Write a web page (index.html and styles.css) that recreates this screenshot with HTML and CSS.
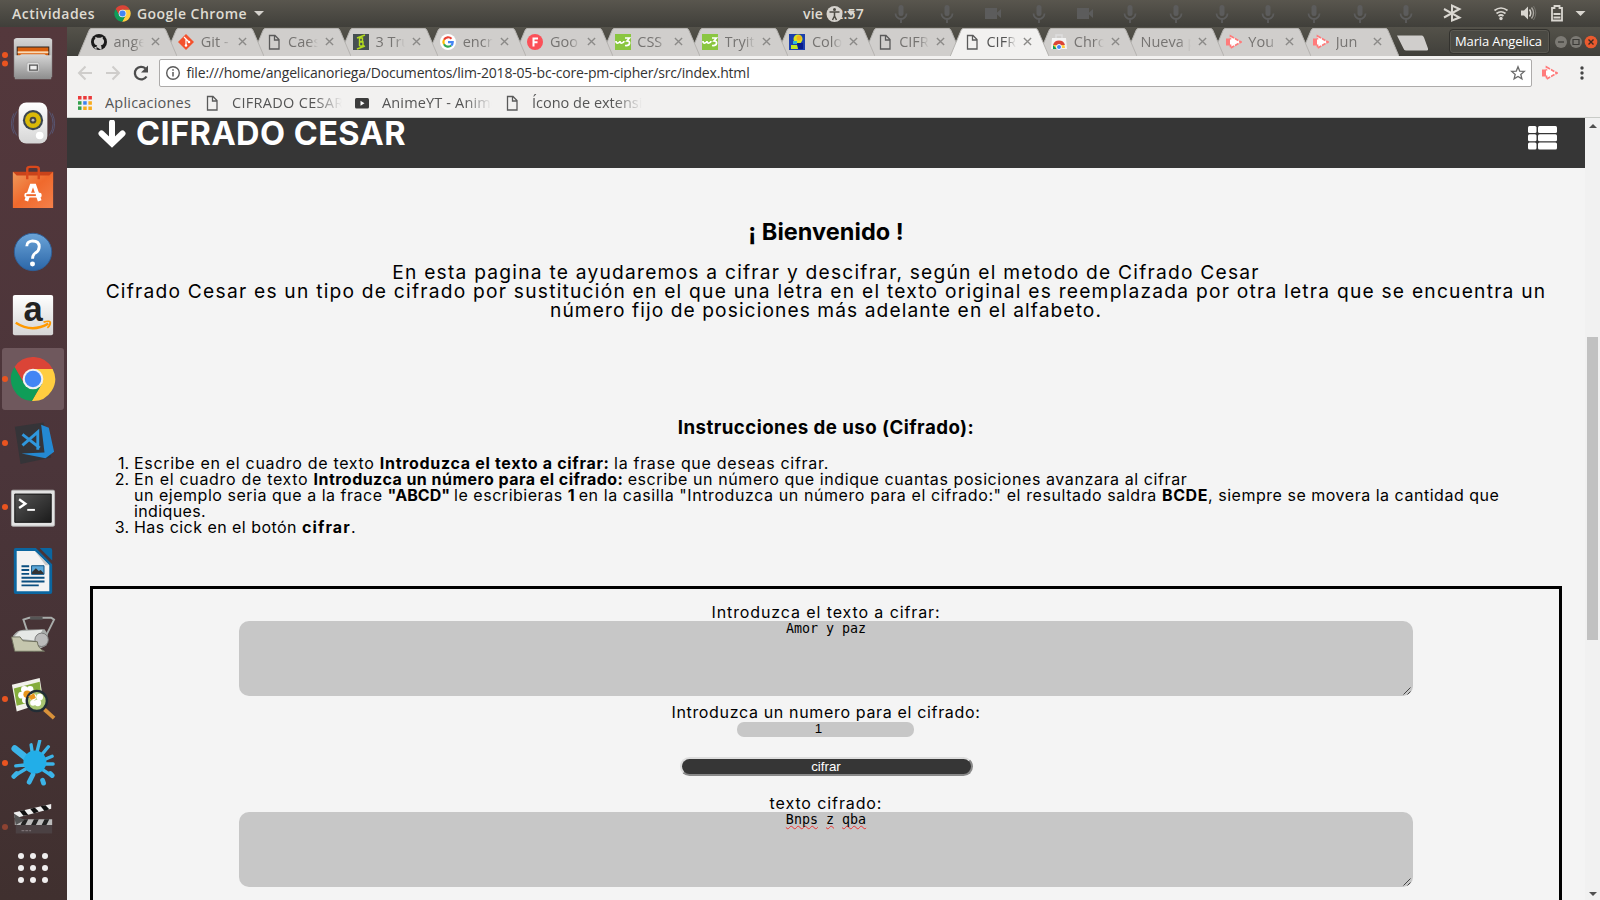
FILE: index.html
```html
<!DOCTYPE html>
<html lang="es">
<head>
<meta charset="utf-8">
<title>CIFRADO CESAR</title>
<link rel="stylesheet" href="styles.css">
</head>
<body>
<svg class="defs" width="0" height="0">
  <defs>
    <symbol id="chrome" viewBox="0 0 48 48">
      <path fill="#db4437" d="M4.7 11.5A23 23 0 0 1 44.5 13.5H24V24L14.9 29.25Z"/>
      <path fill="#ffcd40" d="M44.5 13.5A23 23 0 0 1 22.8 47L33.1 29.25 24 24V13.5Z"/>
      <path fill="#0f9d58" d="M22.8 47A23 23 0 0 1 4.7 11.5L14.9 29.25 24 24 33.1 29.25Z"/>
      <circle cx="24" cy="24" r="10.8" fill="#f1f1f1"/><circle cx="24" cy="24" r="8.6" fill="#4285f4"/>
    </symbol>
    <symbol id="mic" viewBox="0 0 14 20"><rect x="4.5" y="1" width="5" height="11" rx="2.5" fill="#5c5c5c"/><path d="M1.5 9.500a5.500 5.500 0 0 0 11 0M7 15v4" fill="none" stroke="#5c5c5c" stroke-width="1.800"/></symbol>
    <symbol id="cam" viewBox="0 0 18 20"><rect x="1" y="4" width="12" height="11" fill="#5c5c5c"/><path d="M12 9.500 17 5v9z" fill="#5c5c5c"/></symbol>
    <symbol id="page" viewBox="0 0 16 16"><path d="M3.500 1.500h5.500l4 4v9.500h-9.500zM8.500 1.500v4.500h4.500" fill="none" stroke="#5a5a5a" stroke-width="1.300"/></symbol>
    <symbol id="close" viewBox="0 0 10 10"><path d="M1 1l8 8M9 1l-8 8" stroke="#8b8a88" stroke-width="1.500"/></symbol>
    <symbol id="tab" viewBox="0 0 99.2 28"><path d="M.3 28 11 2.500Q12 .5 13 .5H86Q87 .5 88 2.500L98.900 28" fill="var(--face)" stroke="#b5b3b0" stroke-width="1"/></symbol>
    <symbol id="arrowbox" viewBox="0 0 16 16"><path d="M4.500 2 15 8 4.500 14z" fill="#fff" stroke="#ff7b7b" stroke-width="1.700" stroke-dasharray="4 1"/><path d="M0 4.500h4.500v7H0z" fill="#ff7b7b"/><path d="M4 5.500h5v5H4z" fill="#fff"/></symbol>
    <symbol id="w3" viewBox="0 0 16 16"><path d="M0 0h16v16H0z" fill="#8ac640"/><path d="M1 7q0 2.500 2 2t2-2q0 2.500 2 2t2-2M10 4h4.500L12 7q3 0 2.500 2.500T10 11.500" fill="none" stroke="#fff" stroke-width="1.700"/></symbol>
    <linearGradient id="gm" x2="0" y2="1"><stop stop-color="#d6d6d6"/><stop offset="1" stop-color="#8d8d8d"/></linearGradient>
    <linearGradient id="gw" x2="0" y2="1"><stop stop-color="#fff"/><stop offset="1" stop-color="#d5d5d5"/></linearGradient>
    <linearGradient id="go" x2="1" y2="1"><stop stop-color="#ef9a5c"/><stop offset=".5" stop-color="#f0692c"/><stop offset="1" stop-color="#f4814b"/></linearGradient>
    <linearGradient id="gb" x2="0" y2="1"><stop stop-color="#6ba4d8"/><stop offset="1" stop-color="#2b66a8"/></linearGradient>
    <linearGradient id="gk" x2="1" y2="1"><stop stop-color="#555"/><stop offset="1" stop-color="#1b1b1b"/></linearGradient>
  </defs>
</svg>

<div class="topbar">
  <span class="tb-act">Actividades</span>
  <svg class="tb-chrome" width="17" height="17"><use href="#chrome"/></svg>
  <span class="tb-app">Google Chrome</span>
  <i class="tri"></i>
  <div class="clock">vie 12:57
    <svg class="access" width="30" height="18" viewBox="0 0 30 18"><circle cx="8.500" cy="9" r="8" fill="#d5d2cd"/><circle cx="8.500" cy="4.500" r="1.500" fill="#4c4a43"/><path d="M3.500 7h10M8.500 7v4l-2 4M8.500 11l2 4" stroke="#4c4a43" stroke-width="1.500" fill="none"/><path d="M21 6h8l-4 5z" fill="#d5d2cd"/></svg>
  </div>
  <div class="mics">
    <svg><use href="#mic"/></svg><svg><use href="#mic"/></svg><svg><use href="#cam"/></svg><svg><use href="#mic"/></svg><svg><use href="#cam"/></svg><svg><use href="#mic"/></svg><svg><use href="#mic"/></svg><svg><use href="#mic"/></svg><svg><use href="#mic"/></svg><svg><use href="#mic"/></svg><svg><use href="#mic"/></svg><svg><use href="#mic"/></svg>
  </div>
  <svg class="status" width="150" height="26" viewBox="0 0 150 26" fill="none" stroke="#d9d6d0">
    <path d="M4 9 19.500 17.500 12 20.500V5.500L19.500 9 4 17.500" stroke-width="2"/>
    <path d="M54.500 10.500q6.500-5 13 0M56.500 13.500q4.500-3.500 9 0M58.500 16q2.500-2 5 0" stroke-width="1.700"/><circle cx="61" cy="18.500" r="1.700" fill="#d9d6d0" stroke="none"/>
    <path d="M81 10.500h3l4-4v13l-4-4h-3z" fill="#d9d6d0" stroke="none"/><path d="M89.500 9.500q2.500 3.500 0 7" stroke-width="1.500"/><path d="M91.500 7.500q4 5.500 0 11" stroke="#aaa7a1" stroke-width="1.400"/><path d="M93.500 6q4.500 7 0 14" stroke="#77756f"/>
    <path d="M112 8h2.500V6h5v2h2.500v12.500h-10z" stroke-width="1.800"/><path d="M113.500 14h7M113.500 17.500h7" stroke-width="2"/>
    <path d="M135.500 11h10l-5 5z" fill="#d9d6d0" stroke="none"/>
  </svg>
</div>

<div class="desk">
  <div class="dock">
    <div class="app"><i class="dot two"></i><svg viewBox="0 0 48 48"><path d="M4 4q1-2 3-2h34q2 0 3 2v39H4z" fill="url(#gm)"/><path d="M7 11h34v12H7z" fill="#2d2521"/><path d="M8 12h32v9H8z" fill="#d9600f"/><path d="M8 16h32v2H8z" fill="#f9d9b5"/><path d="M5 20h5l2-1h24l2 1h5v25H5z" fill="url(#gm)"/><rect x="17.500" y="27.500" width="13" height="10" rx="2" fill="#ddd" stroke="#aaa"/><path d="M20.500 30.500h8v5h-8z" fill="#eee" stroke="#555" stroke-width="1.300"/></svg></div>
    <div class="app"><svg viewBox="0 0 48 48"><path d="M7 12Q-1 25 7 37M4 14q-5 11 0 21M41 12q8 13 0 25M44 14q5 11 0 21" fill="none" stroke="#5a648c" stroke-opacity=".7"/><rect x="9" y="2.500" width="30" height="43" rx="8" fill="url(#gw)"/><circle cx="24" cy="21" r="10.500" fill="#3b4650"/><circle cx="24" cy="21" r="8.300" fill="#d9b908"/><circle cx="24" cy="21" r="3.500" fill="#444"/><circle cx="24" cy="21" r="1.500" fill="#bbb"/><circle cx="31" cy="37" r="4" fill="#fff"/></svg></div>
    <div class="app"><svg viewBox="0 0 48 48"><path d="M3 8h42v12H3z" fill="#c9431a"/><path d="M3 8 7 12H41L45 8V46H3z" fill="url(#go)"/><path d="M18 16V5q0-2 3-2h6q3 0 3 2v11" fill="none" stroke="#d9481c" stroke-width="2.500"/><path d="M17 38.500 22.500 22.500h3L31 38.500" fill="none" stroke="#fff" stroke-width="4"/><rect x="15" y="30" width="18" height="5" rx="2" fill="#fff"/><path d="M17 32.500h10" stroke="#f0692c" stroke-width="2"/></svg></div>
    <div class="app"><svg viewBox="0 0 48 48"><circle cx="24" cy="25" r="19.500" fill="url(#gb)" stroke="#2f5f98"/><path d="M17.500 19q0-5 6-5.500 7 0 7 6 0 4-4 6.500-3 2-3 6" fill="none" stroke="#fff" stroke-width="3"/><circle cx="23.500" cy="37.500" r="2.600" fill="#fff"/></svg></div>
    <div class="app"><svg viewBox="0 0 48 48"><rect x="3" y="3" width="42" height="42" rx="2" fill="url(#gw)"/><text x="24" y="30" text-anchor="middle" class="amz">a</text><path d="M6 32q17 11 34 1" fill="none" stroke="#f90" stroke-width="2.500"/><path d="M35 31.500q6-2 7 0 .5 3-3 6" fill="none" stroke="#f90" stroke-width="1.800"/></svg></div>
    <div class="app on"><i class="dot"></i><svg viewBox="0 0 48 48"><use href="#chrome" x="0" y="0" width="48" height="48"/></svg></div>
    <div class="app"><i class="dot"></i><svg viewBox="0 0 48 48"><path d="M5 7 35 2.500 43 39 11 46z" fill="#353438"/><path d="M32.500 5 40.500 8 46 33 37 40 12 35 36 34z" fill="#2489d2"/><path d="M13 15 31 29M13 26.500 29 12.500V31" fill="none" stroke="#2f97dd" stroke-width="3"/></svg></div>
    <div class="app"><i class="dot"></i><svg viewBox="0 0 48 48"><rect x="1.500" y="6.500" width="45" height="37.500" rx="1.500" fill="#e3e3e3" stroke="#b5b5b5"/><path d="M5 10.500h38v29.500H5z" fill="url(#gk)" stroke="#111"/><path d="M9.500 16 16 20.500 9.500 25" fill="none" stroke="#fff" stroke-width="2.500"/><path d="M18 27h8" stroke="#fff" stroke-width="2"/></svg></div>
    <div class="app"><svg class="tall" viewBox="0 0 48 48"><path d="M6 0H27L44 17V46q0 2-2 2H6q-2 0-2-2V2q0-2 2-2z" fill="#0b66a0"/><path d="M31 0h11q2 0 2 2v11z" fill="#0b66a0"/><path d="M7 3H26L41 18V45H7z" fill="#f3f3f3"/><path d="M26 3 41 18h-4z" fill="#c9c9c9"/><path d="M12 19h8M12 23h8M12 27h8M12 31h24M12 35h24M12 39h18" stroke="#0b4f80" stroke-width="2"/><path d="M22.500 18.500h13v9h-13z" fill="#5aa7d8" stroke="#0b4f80"/><path d="M23 27v-2l4-4 3 3 2-1 3 3v1z" fill="#333"/></svg></div>
    <div class="app"><svg viewBox="0 0 48 48"><path d="M18 20 14 8 20 6H43L46 8 36 28" fill="none" stroke="#a9adab" stroke-width="2"/><path d="M21 6.500h13" stroke="#555" stroke-width="3"/><path d="M3 25Q8 18 15 18.500L36 18q6 6 2 17L26 41 5 39z" fill="#a9adab"/><path d="M10 20 34 18.500 28 30 3 27z" fill="#e6e8e6"/><circle cx="33" cy="29" r="7" fill="#bbb" stroke="#777"/><path d="M1.500 26h9l3 4 15 1Q29 38 36 41H5z" fill="#c5c6ae" stroke="#6d6e5c"/></svg></div>
    <div class="app"><i class="dot"></i><svg viewBox="0 0 48 48"><path d="M2 9 31 2 35 28 7 37z" fill="#f1f1ea"/><path d="M4 13 31 6 33 24 7 31z" fill="#85ad3b"/><g fill="#fff"><circle cx="12" cy="20" r="3.500"/><circle cx="15" cy="14" r="3.500"/><circle cx="21" cy="14" r="3.500"/><circle cx="16" cy="25" r="3.500"/></g><circle cx="18" cy="19" r="4" fill="#e8951c"/><circle cx="28" cy="26" r="10.500" fill="#a9c672" stroke="#222d35" stroke-width="2.500"/><g fill="#fff"><circle cx="24" cy="22" r="3.500"/><circle cx="31" cy="22" r="3.500"/><circle cx="29" cy="28" r="3.500"/><circle cx="24" cy="28" r="3"/></g><path d="M19 21l6-3 2 5-5 2z" fill="#e8951c"/><path d="M36 35 46 44" stroke="#d9923a" stroke-width="4"/></svg></div>
    <div class="app"><i class="dot"></i><svg viewBox="0 0 48 48"><g stroke="#3cb4e8" stroke-linecap="round" fill="none"><path d="M25 25 5 9" stroke-width="7"/><path d="M25 25 22 5M25 25 31 1M25 25 40 7M25 25 44 17M25 25 45 25M25 25 43 37M25 25 5 37M25 25 6 27" stroke-width="3.500"/><path d="M42 35 44 37M7 35 4 38M24 36 20 44M34 42 35 45" stroke-width="5"/></g><circle cx="26" cy="23" r="12" fill="#22aee8"/></svg></div>
    <div class="app clap"><i class="dot dim"></i><svg viewBox="0 0 48 48"><path d="M4 12 43 3V8L5 18z" fill="#eee"/><path d="M10 10.500l5-1 4 5-5 1zM21 8l5-1 4 4-5 2zM32 5.500l5-1 4 4-5 2z" fill="#111"/><path d="M5 19h39v6H5z" fill="#bbb"/><path d="M14 19h5l-3 6h-5zM25 19h5l-3 6h-5zM36 19h5l-3 6h-5z" fill="#222"/><path d="M4 13 15 20 6 25z" fill="#555"/><path d="M6 25h38v9H6z" fill="#4b4143"/><path d="M12 31h10" stroke="#8a8284" stroke-dasharray="3 1"/></svg></div>
    <svg class="grid" width="30" height="30" viewBox="0 0 30 30" fill="#f0eeee"><circle cx="3" cy="3" r="3"/><circle cx="15" cy="3" r="3"/><circle cx="27" cy="3" r="3"/><circle cx="3" cy="15" r="3"/><circle cx="15" cy="15" r="3"/><circle cx="27" cy="15" r="3"/><circle cx="3" cy="27" r="3"/><circle cx="15" cy="27" r="3"/><circle cx="27" cy="27" r="3"/></svg>
  </div>

  <div class="window">
    <div class="tabs">
      <div class="tab"><svg class="bg"><use href="#tab"/></svg><svg class="fav" viewBox="0 0 16 16"><circle cx="8" cy="8" r="8" fill="#1b1b1b"/><path d="M5.500 16v-3q-3 .5-3.500-1.500M5.500 13q0-1 .8-1.600C2.500 11 2 6 4.300 4.700V2.800l2.200 1h3l2.200-1v1.900C14 6 13.500 11 9.700 11.400q.8.600.8 2V16z" fill="#d0cecc"/></svg><span class="t">ange</span><svg class="x"><use href="#close"/></svg></div>
      <div class="tab"><svg class="bg"><use href="#tab"/></svg><svg class="fav" viewBox="0 0 16 16"><path d="M8 0l8 8-8 8-8-8z" fill="#f4512c"/><path d="M6 3l5 5M8 5v7" stroke="#fff" stroke-width="1.200"/><circle cx="8" cy="11.500" r="1.300" fill="#fff"/><circle cx="11" cy="8" r="1.300" fill="#fff"/></svg><span class="t">Git -</span><svg class="x"><use href="#close"/></svg></div>
      <div class="tab"><svg class="bg"><use href="#tab"/></svg><svg class="fav"><use href="#page"/></svg><span class="t">Caes</span><svg class="x"><use href="#close"/></svg></div>
      <div class="tab"><svg class="bg"><use href="#tab"/></svg><svg class="fav" viewBox="0 0 16 16"><path d="M0 0h16v16H0z" fill="#454f51"/><path d="M6.500 4v8M6.500 4h3v3.500h-3M6.500 8h3.500v4H6.500M4 4l8-3M4 15l8-3" fill="none" stroke="#b4dc1e" stroke-width="1.400"/></svg><span class="t">3 Tru</span><svg class="x"><use href="#close"/></svg></div>
      <div class="tab"><svg class="bg"><use href="#tab"/></svg><svg class="fav" viewBox="0 0 16 16"><circle cx="8" cy="8" r="8" fill="#fff"/><g fill="none" stroke-width="2.200"><path d="M11.500 4.700A4.700 4.700 0 0 0 4 5.700" stroke="#ea4335"/><path d="M4 5.700a4.700 4.700 0 0 0 0 4.600" stroke="#fbbc05"/><path d="M4 10.300a4.700 4.700 0 0 0 7.200 1.200" stroke="#34a853"/><path d="M11.200 11.500q1.500-1.300 1.500-3.300H8" stroke="#4285f4"/></g></svg><span class="t">encr</span><svg class="x"><use href="#close"/></svg></div>
      <div class="tab"><svg class="bg"><use href="#tab"/></svg><svg class="fav" viewBox="0 0 16 16"><circle cx="8" cy="8" r="8" fill="#fb5058"/><path d="M6.500 12.500V4.500H11M6.500 8.300h4" stroke="#fff" stroke-width="2" fill="none"/></svg><span class="t">Goo</span><svg class="x"><use href="#close"/></svg></div>
      <div class="tab"><svg class="bg"><use href="#tab"/></svg><svg class="fav"><use href="#w3"/></svg><span class="t">CSS</span><svg class="x"><use href="#close"/></svg></div>
      <div class="tab"><svg class="bg"><use href="#tab"/></svg><svg class="fav"><use href="#w3"/></svg><span class="t">Tryit</span><svg class="x"><use href="#close"/></svg></div>
      <div class="tab"><svg class="bg"><use href="#tab"/></svg><svg class="fav" viewBox="0 0 16 16"><path d="M0 0h16v16H0z" fill="#1b3fae"/><circle cx="9" cy="5" r="4.500" fill="#d9e41f"/><circle cx="10" cy="4" r="2.500" fill="#f3b01c"/><path d="M2 11h6l2 4H2z" fill="#c3e41f"/><path d="M8 9h6v6H9z" fill="#061c8c"/><path d="M4 7h4v3H4z" fill="#2fb6d6"/></svg><span class="t">Colo</span><svg class="x"><use href="#close"/></svg></div>
      <div class="tab"><svg class="bg"><use href="#tab"/></svg><svg class="fav"><use href="#page"/></svg><span class="t">CIFR</span><svg class="x"><use href="#close"/></svg></div>
      <div class="tab active"><svg class="bg"><use href="#tab"/></svg><svg class="fav"><use href="#page"/></svg><span class="t">CIFR</span><svg class="x"><use href="#close"/></svg></div>
      <div class="tab"><svg class="bg"><use href="#tab"/></svg><svg class="fav" viewBox="0 0 16 16"><path d="M1 4h14l1 11H0z" fill="#f3f3f3"/><path d="M5 4V1h6v3" fill="none" stroke="#ddd" stroke-width="1.500"/><path d="M2 14a6 6 0 0 1 12 0z" fill="#ffcd40"/><path d="M2 11a6.300 6.300 0 0 1 12 0z" fill="#db4437"/><path d="M2 11l4 4H2z" fill="#0f9d58"/><circle cx="8" cy="13" r="2.500" fill="#4285f4" stroke="#fff"/></svg><span class="t">Chro</span><svg class="x"><use href="#close"/></svg></div>
      <div class="tab plain"><svg class="bg"><use href="#tab"/></svg><span class="t">Nueva p</span><svg class="x"><use href="#close"/></svg></div>
      <div class="tab"><svg class="bg"><use href="#tab"/></svg><svg class="fav"><use href="#arrowbox"/></svg><span class="t">You</span><svg class="x"><use href="#close"/></svg></div>
      <div class="tab"><svg class="bg"><use href="#tab"/></svg><svg class="fav"><use href="#arrowbox"/></svg><span class="t">Jun</span><svg class="x"><use href="#close"/></svg></div>
      <svg class="newtab" width="34" height="16" viewBox="0 0 34 16"><path d="M1 .5h25q1 0 2 2l4 11q.5 2-1 2H10q-2 0-2.500-2z" fill="#d0cecc"/></svg>
      <div class="user">Maria Angelica</div>
      <svg class="winbtn" width="46" height="14" viewBox="0 0 46 14"><circle cx="7" cy="7" r="6" fill="#7c7a74"/><path d="M4 7h6" stroke="#3c3b37" stroke-width="1.300"/><circle cx="22" cy="7" r="6" fill="#7c7a74"/><path d="M19 4.500h6v5h-6z" fill="none" stroke="#3c3b37" stroke-width="1.200"/><circle cx="37" cy="7" r="6.300" fill="#ea5a2e"/><path d="M34.500 4.500l5 5M39.500 4.500l-5 5" stroke="#3c2a22" stroke-width="1.400"/></svg>
    </div>

    <div class="toolbar">
      <svg class="nav" width="78" height="20" viewBox="0 0 78 20" fill="none"><g stroke="#cfcdcb" stroke-width="2"><path d="M15 10H2.500M8.500 3.500 2 10l6.500 6.500M29 10h12.500M35.500 3.500 42 10l-6.500 6.500"/></g><path d="M69.500 13.500A6.300 6.300 0 1 1 68.500 5.500" stroke="#4c4c4c" stroke-width="2.300"/><path d="M71 2.500v7h-7z" fill="#4c4c4c"/></svg>
      <div class="url">
        <svg width="16" height="16" viewBox="0 0 16 16" fill="none" stroke="#5a5a5a"><circle cx="8" cy="8" r="6.300" stroke-width="1.400"/><path d="M8 7v4.500M8 4.300v1.500" stroke-width="1.500"/></svg>
        <span class="urltext">file:///home/angelicanoriega/Documentos/lim-2018-05-bc-core-pm-cipher/src/index.html</span>
        <svg width="16" height="16" viewBox="0 0 16 16"><path d="M8 1.800l1.700 4.300 4.600.3-3.500 3 1.100 4.500L8 11.400l-3.900 2.500 1.100-4.500-3.500-3 4.600-.3z" fill="none" stroke="#6a6a6a" stroke-width="1.300"/></svg>
      </div>
      <svg class="ext" width="16" height="16"><use href="#arrowbox"/></svg>
      <svg width="4" height="16" viewBox="0 0 4 16" fill="#444"><circle cx="2" cy="3" r="1.700"/><circle cx="2" cy="8" r="1.700"/><circle cx="2" cy="13" r="1.700"/></svg>
    </div>

    <div class="bookmarks">
      <svg width="14" height="14" viewBox="0 0 14 14"><path d="M0 0h3.500v3.500H0zM5.200 0h3.500v3.500H5.200zM10.400 0h3.500v3.500h-3.500z" fill="#ea3a3a"/><path d="M0 5.200h3.500v3.500H0z" fill="#33a04b"/><path d="M5.200 5.200h3.500v3.500H5.200z" fill="#3e82f0"/><path d="M10.400 5.200h3.500v3.500h-3.500zM5.200 10.400h3.500v3.500H5.200zM10.400 10.400h3.500v3.500h-3.500z" fill="#f8ab1c"/><path d="M0 10.400h3.500v3.500H0z" fill="#33a04b"/></svg>
      <span class="bm apps">Aplicaciones</span>
      <svg width="16" height="16"><use href="#page"/></svg>
      <span class="bm fade b2">CIFRADO CESAR</span>
      <svg width="16" height="16" viewBox="0 0 16 16"><rect x="1" y="3" width="14" height="10.500" rx="1.500" fill="#3c3c3c"/><path d="M6.500 5.700 10.500 8.200 6.500 10.700z" fill="#fff"/></svg>
      <span class="bm fade b3">AnimeYT - Anime</span>
      <svg width="16" height="16"><use href="#page"/></svg>
      <span class="bm fade">Ícono de extensi</span>
    </div>

    <div class="view">
      <div class="site">
        <header class="head">
          <svg class="down" width="30" height="28" viewBox="0 0 30 28"><path d="M15 2.500V23M4.500 13.500 15 23.500 25.500 13.500" fill="none" stroke="#fff" stroke-width="6" stroke-linecap="round" stroke-linejoin="miter"/></svg>
          <span class="title">CIFRADO CESAR</span>
          <svg class="list" width="29" height="24" viewBox="0 0 29 24" fill="#fff"><rect y="0" width="8.500" height="7" rx="1.500"/><rect x="10" width="19" height="7" rx="1.500"/><rect y="8.300" width="8.500" height="7" rx="1.500"/><rect x="10" y="8.300" width="19" height="7" rx="1.500"/><rect y="16.600" width="8.500" height="7" rx="1.500"/><rect x="10" y="16.600" width="19" height="7" rx="1.500"/></svg>
        </header>
        <h1>¡ Bienvenido !</h1>
        <p class="intro">En esta pagina te ayudaremos a cifrar y descifrar, según el metodo de Cifrado Cesar<br>Cifrado Cesar es un tipo de cifrado por sustitución en el que una letra en el texto original es reemplazada por otra letra que se encuentra un<br><span class="end">número fijo de posiciones más adelante en el alfabeto.</span></p>
        <h2>Instrucciones de uso (Cifrado):</h2>
        <div class="steps">
          <div class="n">1.</div><div class="wide">Escribe en el cuadro de texto <b>Introduzca el texto a cifrar: </b>la frase que deseas cifrar.</div>
          <div class="n">2.</div><div><span class="wide">En el cuadro de texto </span><b class="mid">Introduzca un número para el cifrado: </b><span class="open">escribe un número que indique cuantas posiciones avanzara al cifrar</span><br>un ejemplo seria que a la frace <b class="abcd">"ABCD" </b>le escribieras <b class="one">1 </b><span class="open">en la casilla "Introduzca un número para el cifrado:" el resultado saldra <b>BCDE</b></span>, siempre se movera la cantidad que<br><span class="short">indiques.</span></div>
          <div class="n">3.</div><div><span class="mid">Has cick en el botón </span><b class="act">cifrar</b>.</div>
        </div>
        <div class="form">
          <div class="label">Introduzca el texto a cifrar:</div>
          <div class="area">Amor y paz<svg class="grip" width="8" height="8"><path d="M.5 7.500l7-7M4.500 7.500l3-3" stroke="#444"/></svg></div>
          <div class="label second">Introduzca un numero para el cifrado:</div>
          <div class="number">1</div>
          <button class="go">cifrar</button>
          <div class="label third">texto cifrado:</div>
          <div class="area"><u>Bnps</u> <u>z</u> <u>qba</u><svg class="grip" width="8" height="8"><path d="M.5 7.500l7-7M4.500 7.500l3-3" stroke="#444"/></svg></div>
        </div>
      </div>
      <div class="scroll"><i class="up"></i><div class="thumb"></div><i class="dn"></i></div>
    </div>
  </div>
</div>
</body>
</html>
```
FILE: styles.css
```css
*{box-sizing:border-box}
body{margin:0;width:1600px;height:900px;overflow:hidden;font-family:"Open Sans","Noto Sans",sans-serif;background:#f4f4f4}
.defs{position:absolute}
svg{display:block;flex:none}
.topbar{height:27px;display:flex;align-items:center;background:linear-gradient(#59564e,#403f3a);color:#dfdbd2;font-size:14px;font-weight:600;line-height:26px;white-space:nowrap}
.tb-act{width:114px;padding-left:12px;flex:none;letter-spacing:.503px}
.tb-chrome{margin-right:6px}
.tb-app{width:117px;flex:none;letter-spacing:.43px}
.tri{border:5px solid transparent;border-top-color:#d5d2cd;border-bottom:0}
.clock{margin-left:539px;width:86px;position:relative;flex:none;letter-spacing:.227px}
.access{position:absolute;left:23px;top:4px}
.mics{display:flex;gap:27.900px;margin-left:3px;width:520px;flex:none}
.mics svg{width:18px;height:20px}
.status{margin-left:28px;margin-top:-1px}
.desk{display:flex;height:873px}
.dock{width:67px;flex:none;background:linear-gradient(#54383c,#4b353a 50%,#40302f);padding-right:1px}
.app{height:64px;display:flex;align-items:center;justify-content:center;position:relative}
.app svg{width:46px;height:46px}
.app .tall{height:48px}
.app.on:before{content:"";position:absolute;left:2px;top:1px;width:62px;height:62px;border-radius:3px;background:#6f585d}
.app.on svg{position:relative}
.dot{position:absolute;left:2px;top:29px;width:6px;height:6px;border-radius:50%;background:#e95420;z-index:1}
.dot.two{top:25px;box-shadow:0 8.500px #e95420}
.dot.dim{background:#8d4332}
.clap svg{margin-top:-6px}
.grid{margin:-6px 0 0 18px}
.amz{font:bold 36px "Liberation Sans",sans-serif;fill:#222}
.window{flex:1;min-width:0;display:flex;flex-direction:column}
.tabs{height:29px;display:flex;align-items:flex-end;background:linear-gradient(#54524a,#403f3a);padding-left:10.500px;flex:none}
.tab{--face:#d0cecc;width:99.200px;margin-right:-11.900px;height:28px;flex:none;display:flex;align-items:center;padding:0 0 1px 13.500px;position:relative;color:#767472;font-size:14.500px;z-index:1}
.tab:nth-child(1){z-index:15}.tab:nth-child(2){z-index:14}.tab:nth-child(3){z-index:13}.tab:nth-child(4){z-index:12}.tab:nth-child(5){z-index:11}.tab:nth-child(6){z-index:10}.tab:nth-child(7){z-index:9}.tab:nth-child(8){z-index:8}.tab:nth-child(9){z-index:7}.tab:nth-child(10){z-index:6}.tab:nth-child(12){z-index:5}.tab:nth-child(13){z-index:4}.tab:nth-child(14){z-index:3}.tab:nth-child(15){z-index:2}
.tab.active{--face:#f2f1f0;z-index:20;color:#555}
.bg{position:absolute;left:0;top:0;width:99.200px;height:28px}
.fav{width:16px;height:16px;position:relative}
.t{position:relative;width:30px;margin:0 7px 0 6.500px;overflow:hidden;white-space:pre;-webkit-mask:linear-gradient(90deg,#000 65%,transparent);mask:linear-gradient(90deg,#000 65%,transparent)}
.plain .t{width:50px;margin-left:2px;-webkit-mask:linear-gradient(90deg,#000 75%,transparent);mask:linear-gradient(90deg,#000 75%,transparent)}
.x{width:9px;height:9px;position:relative}
.newtab{margin:0 0 5px 9.500px}
.user{width:101px;height:25px;margin:0 0 2px 18.500px;border:1px solid #33322e;border-radius:4px;background:#4a4943;box-shadow:inset 0 0 0 1px #5b5952;color:#fff;font-size:13px;line-height:23px;padding-left:5px;white-space:nowrap;flex:none;letter-spacing:-.121px}
.winbtn{margin:0 0 7px 4px}
.toolbar{height:33px;background:#f2f1f0;display:flex;align-items:center;flex:none}
.nav{margin-left:10px}
.url{margin-left:4px;width:1373px;height:28px;border:1px solid #adabaa;border-radius:2px;background:#fff;display:flex;align-items:center;padding:0 5px;color:#333;font-size:14px}
.urltext{flex:1;margin-left:5.500px;white-space:nowrap;letter-spacing:-.188px}
.ext{margin:0 22px 0 10px}
.bookmarks{height:29px;background:#f2f1f0;border-bottom:1px solid #c9cbc7;display:flex;align-items:center;padding:0 0 1px 11px;color:#555;font-size:14.500px;white-space:nowrap;flex:none}
.bm{width:110px;margin:0 12px;overflow:hidden}
.apps{width:88px;margin:0 11px 0 13px;letter-spacing:.197px}
.b2{letter-spacing:.3px}
.b3{letter-spacing:.15px}
.fade{-webkit-mask:linear-gradient(90deg,#000 75%,transparent);mask:linear-gradient(90deg,#000 75%,transparent)}
.view{flex:1;display:flex;min-height:0;overflow:hidden}
.site{width:1518px;background:#f4f4f4;color:#000;font-family:Inter,sans-serif}
.head{height:50px;background:#363636;display:flex;align-items:flex-start;overflow:hidden;color:#fff}
.down{margin:2px 0 0 30px}
.title{margin-left:9px;flex:1;font-size:32.500px;font-weight:700;line-height:31px;white-space:nowrap;letter-spacing:.45px}
.list{margin:8px 28px 0 0}
h1{margin:50px 0 0;text-align:center;font-size:23.500px;line-height:28px;letter-spacing:.032px}
.intro{margin:17px 0 0;text-align:center;font-size:19.200px;line-height:19px;letter-spacing:1.229px;white-space:nowrap}
.end{letter-spacing:1.079px}
h2{margin:97px 0 0;text-align:center;font-size:18.700px;line-height:22px;letter-spacing:.442px}
.steps{margin:16px 0 0 50px;display:grid;grid-template-columns:12px 1fr;column-gap:5px;font-size:16px;line-height:16px;white-space:nowrap;letter-spacing:.52px}
.n{justify-self:end;letter-spacing:0}
.wide{letter-spacing:.69px}
.mid{letter-spacing:.46px}
.open{letter-spacing:.585px}
.abcd{letter-spacing:.056px}
.one{letter-spacing:.156px}
.short{letter-spacing:.373px}
.act{letter-spacing:1.13px}
.form{margin:51px 23px 0;height:400px;border:3px solid #000;padding-top:15px;display:flex;flex-direction:column;align-items:center}
.label{font-size:16px;line-height:16px;white-space:nowrap;letter-spacing:.896px}
.second{margin-top:8px;letter-spacing:.66px}
.third{margin-top:19px}
.area{margin-top:1px;width:1174px;height:75px;border-radius:10px;background:#c7c7c7;text-align:center;font:13.333px/15px "DejaVu Sans Mono",monospace;position:relative;flex:none}
.area u{text-decoration:underline wavy #e33 1px;text-underline-offset:1px;text-decoration-skip-ink:none}
.grip{position:absolute;right:2px;bottom:1px}
.number{margin:2px 1px 0 0;width:177px;height:15px;border-radius:7px;background:#c7c7c7;font:13.333px/14px "Liberation Sans",sans-serif;text-align:center;padding-right:14px}
.go{margin-top:20px;width:293px;height:19px;padding:0 0 1px;border:2px outset #ddd;border-radius:10px;background:#363636;color:#fff;font:13.333px/13px "Liberation Sans",sans-serif}
.scroll{width:15px;background:#f1f1f1;display:flex;flex-direction:column;align-items:center;padding:6px 0 4px}
.up{border:4px solid transparent;border-bottom-color:#505050;border-top:0}
.thumb{width:11px;height:303px;background:#c1c1c1;margin:209px 0 auto}
.dn{border:4px solid transparent;border-top-color:#505050;border-bottom:0}
```
